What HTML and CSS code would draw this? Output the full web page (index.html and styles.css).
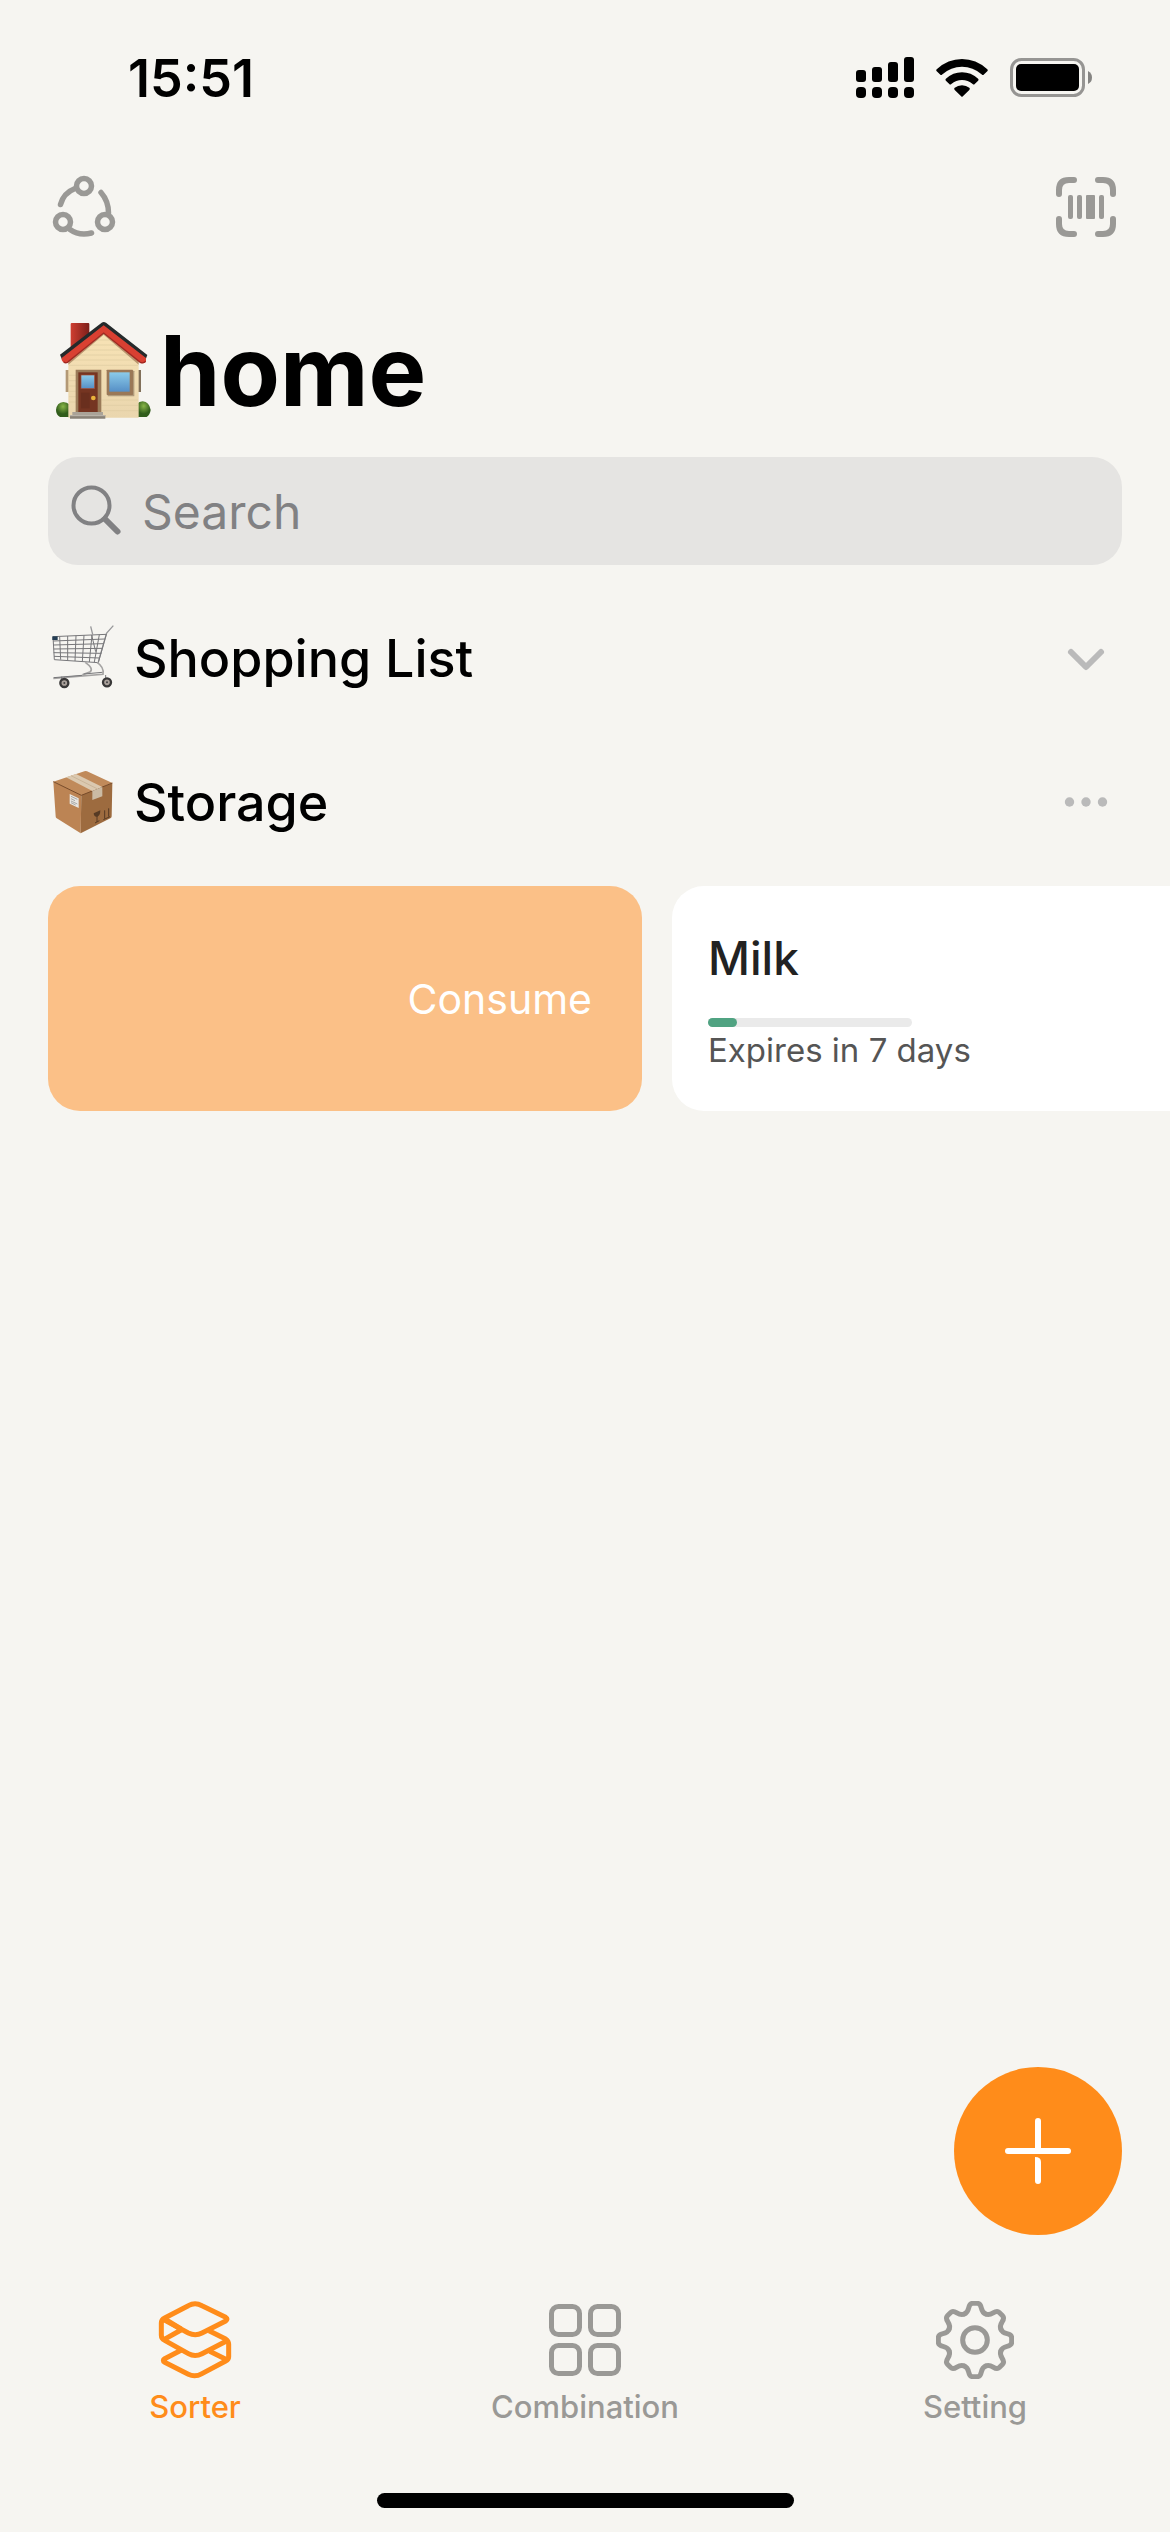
FILE: index.html
```html
<!DOCTYPE html>
<html lang="en">
<head>
<meta charset="utf-8">
<meta name="viewport" content="width=device-width, initial-scale=1">
<title>home</title>
<link rel="stylesheet" href="styles.css">
</head>
<body>
<div class="app">
  <header class="status">
    <time class="status-time">15:51</time>
    <div class="status-icons">
      <svg width="58" height="42" viewBox="0 0 58 42" aria-hidden="true">
        <rect x="0" y="13" width="10" height="12" rx="3"/><rect x="16" y="10" width="10" height="15" rx="3"/><rect x="32" y="5" width="10" height="20" rx="3"/><rect x="48" y="0" width="10" height="25" rx="3"/>
        <rect x="0" y="30" width="10" height="11" rx="4"/><rect x="16" y="30" width="10" height="11" rx="4"/><rect x="32" y="30" width="10" height="11" rx="4"/><rect x="48" y="30" width="10" height="11" rx="4"/>
      </svg>
      <svg width="52" height="38" viewBox="348 86 153 112" aria-hidden="true">
        <path d="M350 116Q383 86 424.500 86T499 116Q502 119 499 122L489 132Q486 135 483 132Q457 109 424.500 109T366 132Q363 135 360 132L350 122Q347 119 350 116Z"/>
        <path d="M377 144Q398 125 424.500 125T472 144Q475 147 472 150L462 160Q459 163 456 160Q442 148 424.500 148T393 160Q390 163 387 160L377 150Q374 147 377 144Z"/>
        <path d="M403 171Q412 163 424.500 163T446 171Q449 174 446 177L427 196Q424.500 199 422 196L403 177Q400 174 403 171Z"/>
      </svg>
      <svg width="82" height="40" viewBox="0 0 82 40" aria-hidden="true">
        <rect x="1.500" y="1.500" width="72" height="36" rx="10" fill="none" stroke="#969593" stroke-width="3"/>
        <rect x="6" y="6" width="63" height="27" rx="5"/>
        <path d="M78 13Q82 15 82 19.500T78 26Z" fill="#858482"/>
      </svg>
    </div>
  </header>

  <main class="content">
    <div class="toolbar">
      <button class="icon-button" aria-label="Share">
        <svg width="72" height="66" viewBox="0 0 72 66" fill="none" stroke="#9a9996" stroke-width="5.500" stroke-linecap="round">
          <circle cx="36" cy="12" r="7.500"/><circle cx="15" cy="48" r="7.500"/><circle cx="57" cy="48" r="7.500"/>
          <path d="M27 14.500Q15.500 19 12.500 30.500M53 18.500Q60.500 27 60.500 39M22 55.500Q31 62 43.500 59"/>
        </svg>
      </button>
      <button class="icon-button" aria-label="Scan barcode">
        <svg width="72" height="66" viewBox="-6 -3 72 66" fill="none" stroke="#9a9996" stroke-width="6" stroke-linecap="round">
          <path d="M3 17V13Q3 3 13 3H18M42 3H47Q57 3 57 13V17M57 42V47Q57 57 47 57H42M18 57H13Q3 57 3 47V42"/>
          <g fill="#9a9996" stroke="none"><rect x="12" y="18" width="5" height="24" rx="2"/><rect x="21" y="18" width="5" height="24" rx="2"/><rect x="30" y="18" width="9" height="24" rx="1"/><rect x="43" y="18" width="5" height="24" rx="2"/></g>
        </svg>
      </button>
    </div>

    <h1 class="title">
      <svg width="95" height="97" viewBox="80 66 285 291" aria-hidden="true">
        <defs>
          <linearGradient id="wall" x1="0" y1="0" x2="0" y2="1"><stop offset="0" stop-color="#f8e3b5"/><stop offset="1" stop-color="#ead6ae"/></linearGradient>
          <linearGradient id="chimney"><stop offset="0" stop-color="#cf3e31"/><stop offset="1" stop-color="#7c1f1a"/></linearGradient>
          <linearGradient id="glass" x1="0" y1="0" x2="0" y2="1"><stop offset="0" stop-color="#8bcbe9"/><stop offset="1" stop-color="#568fc6"/></linearGradient>
          <radialGradient id="bush" cy=".3"><stop offset="0" stop-color="#88b648"/><stop offset="1" stop-color="#315d1c"/></radialGradient>
        </defs>
        <rect x="124" y="69" width="56" height="80" rx="3" fill="url(#chimney)"/>
        <rect x="109" y="210" width="10" height="66" fill="#b39976"/><rect x="325" y="210" width="10" height="66" fill="#81705a"/>
        <path d="M80 330Q82 308 102 306Q112 306 122 314V351H92Q80 345 80 330Z" fill="url(#bush)"/>
        <path d="M364 330Q360 306 340 304Q330 304 322 312V351H352Q362 345 364 330Z" fill="url(#bush)"/>
        <path d="M117 178L223 90L328 178V353H117Z" fill="url(#wall)"/>
        <path d="M195 120H250M177 135H270M159 150H288M141 165H306M119 180H326M119 196H326M119 226H140M119 242H140M119 258H140M119 274H140M119 290H140M119 306H140M217 300H326M217 316H326M217 332H326" stroke="#decba2" stroke-width="2"/>
        <path d="M117 178L223 90L328 178V194L223 104L117 194Z" fill="#a17653" opacity=".7"/>
        <path d="M92 164L217 68Q223 64 230 68L354 165L348 181L223 88L99 181Z" fill="#252a2b"/>
        <path d="M97 174L223 76L350 174V185Q342 193 334 187L223 98L113 187Q102 192 97 180Z" fill="#d94032"/>
        <path d="M103 185Q108 190 114 187L223 99L333 187Q342 191 349 184" fill="none" stroke="#a12922" stroke-width="4"/>
        <path d="M139 209H216V338H139Z" fill="#9a7b59"/><path d="M147 217H205V336H147Z" fill="#753522"/>
        <rect x="155" y="225" width="41" height="41" fill="url(#glass)" stroke="#a54b31" stroke-width="2"/>
        <path d="M155 278H181V325H155Z" fill="#6a2f1e"/><circle cx="192" cy="294" r="7" fill="#eab33a"/>
        <rect x="235" y="212" width="80" height="77" rx="2" fill="#715b43" opacity=".5"/><rect x="232" y="209" width="79" height="76" rx="2" fill="#9a7857"/>
        <rect x="240" y="217" width="61" height="58" fill="url(#glass)"/>
        <path d="M129 336H221V345H129Z" fill="#aaa398"/><path d="M122 345H228V356H122Z" fill="#898277"/><path d="M122 347H228" stroke="#c3bdb2" stroke-width="3"/>
      </svg>
      <span>home</span>
    </h1>

    <label class="search">
      <svg width="52" height="52" viewBox="0 0 52 52" fill="none" stroke="#818183" stroke-linecap="round" aria-hidden="true">
        <circle cx="21.500" cy="20.500" r="18" stroke-width="4"/><path d="M35 34L47.500 46.500" stroke-width="6"/>
      </svg>
      <input type="search" placeholder="Search" aria-label="Search">
    </label>

    <section class="row">
      <svg width="66" height="66" viewBox="62 80 198 198" fill="none" stroke="#77777a" stroke-width="3" aria-hidden="true">
        <path d="M181 84L187 108M249 82L229 104L204 190" stroke="#98989a" stroke-width="4"/>
        <path d="M68 115L228 108L204 193L72 184Z"/>
        <path d="M69 128L223 122M69 140L220 136M70 152L216 150M70 163L213 165M71 174L208 179M88 115L91 184M112 113L112 186M137 112L134 188M161 111L156 189M185 110L177 191M207 109L192 191M184 110L196 160"/>
        <path d="M165 192Q190 210 180 220L156 229M200 192Q222 206 218 228L69 240" stroke="#a5a4a3" stroke-width="5"/>
        <path d="M160 227L216 222M70 238L155 231M94 235V245M226 230V240" stroke-width="3"/>
        <rect x="66" y="114" width="16" height="11" fill="#253e54" stroke="none"/>
        <circle cx="102" cy="254" r="12" fill="#aaa19b" stroke="#393838" stroke-width="7"/><circle cx="230" cy="252" r="12" fill="#aaa19b" stroke="#393838" stroke-width="7"/>
        <circle cx="102" cy="254" r="3" fill="#444" stroke="none"/><circle cx="230" cy="252" r="3" fill="#444" stroke="none"/>
      </svg>
      <h2>Shopping List</h2>
      <button class="row-action" aria-label="Expand shopping list">
        <svg width="72" height="48" viewBox="0 0 72 48" fill="none" stroke="#bababa" stroke-width="6" stroke-linecap="round" stroke-linejoin="round"><path d="M21 18L36 33L51 18"/></svg>
      </button>
    </section>

    <section class="row">
      <svg width="66" height="66" viewBox="62 508 198 198" aria-hidden="true">
        <path d="M69 546L153 584L151 701L78 655Q76 653 76 650Z" fill="#bc8454"/>
        <path d="M153 584L246 550L244 650Q244 654 240 656L151 701Z" fill="#9d6b3f"/>
        <path d="M69 546L162 515Q166 513 170 515L246 550L153 587Z" fill="#c08a5a"/>
        <path d="M69 546L153 587L246 550" fill="none" stroke="#774b2a" stroke-width="3"/>
        <path d="M107 533L137 523L216 562L186 574Z" fill="#dbc9b0"/><path d="M186 574L216 562V590L186 601Z" fill="#cbbba4"/>
        <path d="M122 528L200 567" stroke="#c1ab8d" stroke-width="2"/>
        <path d="M118 583L145 596V625L118 612Z" fill="#e8e6e2"/><path d="M122 590L141 599M122 597L134 603M122 604L141 613M122 609L136 616" stroke="#88898b" stroke-width="2"/>
        <path d="M190 641L210 632Q210 648 201 651Q191 653 190 641Z" fill="#563a24"/><path d="M200 649V667M194 670L207 663M223 632V657M235 626V651M219 660L239 651" fill="none" stroke="#563a24" stroke-width="3"/>
      </svg>
      <h2>Storage</h2>
      <button class="row-action" aria-label="Storage options">
        <svg width="72" height="48" viewBox="0 0 72 48" fill="#bababa"><circle cx="19.500" cy="24" r="4.700"/><circle cx="36" cy="24" r="4.700"/><circle cx="52.500" cy="24" r="4.700"/></svg>
      </button>
    </section>

    <div class="swipe">
      <button class="consume">Consume</button>
      <article class="item">
        <h3>Milk</h3>
        <div class="track"><div class="fill" style="width:14%"></div></div>
        <p>Expires in 7 days</p>
      </article>
    </div>
  </main>

  <footer class="bottom">
    <button class="add" aria-label="Add item">
      <svg width="66" height="66" viewBox="0 0 66 66" fill="#fff"><rect y="30" width="66" height="6" rx="3"/><path d="M30 32V3A3 3 0 0 1 36 3V32ZM30 39Q36 39 36 44V63A3 3 0 0 1 30 63Z"/></svg>
    </button>
    <nav class="tabs">
      <a class="tab active" href="#sorter" aria-current="page">
        <svg width="78" height="78" viewBox="75 63 234 234" fill="none" stroke="currentColor" stroke-width="15" stroke-linejoin="round">
          <path d="M98 119L172 159Q193 169 213 159L284 123Q292 117 284 112L213 77Q192 66 172 77L101 114Q91 119 91 129V166Q91 176 101 181L172 221Q192 232 213 221L291 181"/>
          <path d="M101 117L150 147M150 150L100 178M234 152L284 177Q293 183 293 193V230Q293 238 284 243L213 281Q192 293 172 283L101 247Q93 241 101 236L150 211M236 214L289 240"/>
        </svg>
        <span>Sorter</span>
      </a>
      <a class="tab" href="#combination">
        <svg width="78" height="78" viewBox="-3 -3 78 78" fill="none" stroke="currentColor" stroke-width="5"><rect x="2.500" y="2.500" width="28" height="28" rx="7"/><rect x="41.500" y="2.500" width="28" height="28" rx="7"/><rect x="2.500" y="41.500" width="28" height="28" rx="7"/><rect x="41.500" y="41.500" width="28" height="28" rx="7"/></svg>
        <span>Combination</span>
      </a>
      <a class="tab" href="#setting">
        <svg width="78" height="78" viewBox="-117 -117 234 234" fill="none" stroke="currentColor" stroke-width="15" stroke-linecap="round">
          <defs><path id="tooth" d="M-32 -78C-24 -81 -21 -87 -19 -96Q-16 -110 -7 -110H7Q16 -110 19 -96C21 -87 24 -81 32 -78"/></defs>
          <use href="#tooth"/><use href="#tooth" transform="rotate(45)"/><use href="#tooth" transform="rotate(90)"/><use href="#tooth" transform="rotate(135)"/><use href="#tooth" transform="rotate(180)"/><use href="#tooth" transform="rotate(225)"/><use href="#tooth" transform="rotate(270)"/><use href="#tooth" transform="rotate(315)"/>
          <circle r="37"/>
        </svg>
        <span>Setting</span>
      </a>
    </nav>
    <div class="home-indicator"></div>
  </footer>
</div>
</body>
</html>
```

FILE: styles.css
```css
* { box-sizing: border-box; }

body {
  margin: 0;
  background: #f6f5f1;
  color: #000;
  font-family: Inter, "Liberation Sans", sans-serif;
}

h1, h2, h3, p { margin: 0; }

button {
  padding: 0;
  border: 0;
  background: none;
  font: inherit;
  cursor: pointer;
}

svg { display: block; flex: none; }

.app {
  display: flex;
  flex-direction: column;
  min-height: 100vh;
  overflow: hidden;
}

.status {
  display: flex;
  align-items: center;
  justify-content: space-between;
  height: 156px;
  padding: 0 78px 0 128px;
}

.status-time { font-size: 52px; font-weight: 600; }

.status-icons { display: flex; align-items: center; gap: 22px; }

.content { flex: 1; padding: 0 48px; }

.toolbar {
  display: flex;
  align-items: center;
  justify-content: space-between;
  height: 102px;
}

.title {
  display: flex;
  align-items: center;
  gap: 9px;
  height: 122px;
  margin: 51px 0 26px;
  padding-left: 8px;
  font-size: 97px;
  font-weight: 700;
}

.search {
  display: flex;
  align-items: center;
  gap: 20px;
  height: 108px;
  margin-bottom: 21px;
  padding: 0 22px;
  border-radius: 30px;
  background: #e5e4e2;
}

.search input {
  flex: 1;
  min-width: 0;
  padding: 0;
  border: 0;
  outline: 0;
  background: none;
  font: inherit;
  font-size: 48px;
}

.search input::placeholder { color: #818183; opacity: 1; }

.row {
  display: flex;
  align-items: center;
  gap: 17px;
  height: 144px;
  padding-left: 3px;
}

.row h2 { flex: 1; font-size: 52px; font-weight: 500; }

.swipe { display: flex; gap: 30px; margin-top: 12px; }

.consume, .item { border-radius: 32px; }

.consume {
  flex: 0 0 594px;
  padding-right: 50px;
  background: #fbc087;
  color: #fff;
  font-size: 41px;
  text-align: right;
}

.item {
  flex: 0 0 100%;
  padding: 42px 36px 41px;
  background: #fff;
}

.item h3 {
  margin-bottom: 30px;
  color: #222;
  font-size: 46px;
  font-weight: 500;
  line-height: 60px;
}

.track {
  width: 204px;
  height: 9px;
  margin-bottom: 3px;
  border-radius: 5px;
  background: #eaeaea;
}

.fill { height: 100%; border-radius: 5px; background: #50a382; }

.item p { color: #555; font-size: 33px; line-height: 40px; }

.bottom {
  display: flex;
  flex-direction: column;
  padding-bottom: 24px;
}

.add {
  display: flex;
  align-items: center;
  justify-content: center;
  align-self: flex-end;
  width: 168px;
  height: 168px;
  margin: 0 48px 66px 0;
  border-radius: 50%;
  background: #ff8c1a;
}

.tabs { display: flex; margin-bottom: 68px; }

.tab {
  display: flex;
  flex: 1;
  flex-direction: column;
  align-items: center;
  gap: 10px;
  color: #9a9996;
  font-size: 31px;
  font-weight: 500;
  line-height: 36px;
  text-decoration: none;
}

.tab.active { color: #ff8c1a; }

.home-indicator {
  align-self: center;
  width: 417px;
  height: 15px;
  border-radius: 8px;
  background: #000;
}
```
